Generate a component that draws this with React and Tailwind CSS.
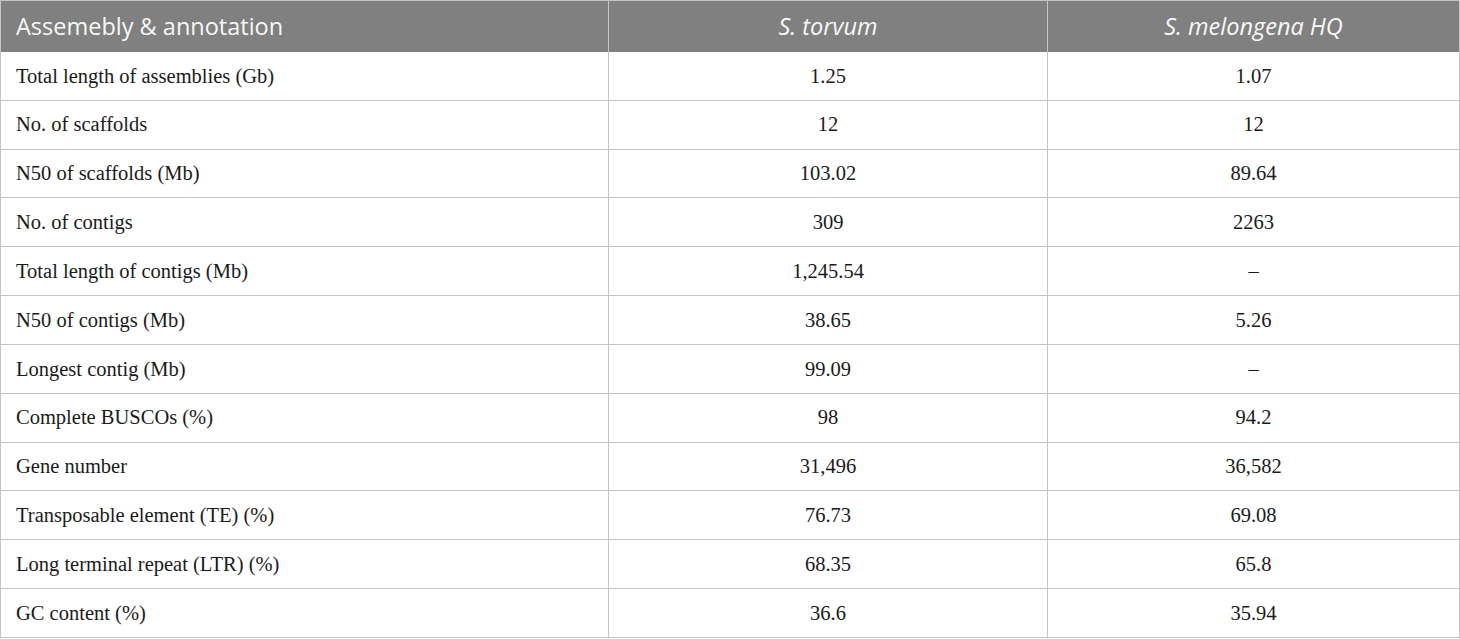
const rows = [
  ["Total length of assemblies (Gb)", "1.25", "1.07"],
  ["No. of scaffolds", "12", "12"],
  ["N50 of scaffolds (Mb)", "103.02", "89.64"],
  ["No. of contigs", "309", "2263"],
  ["Total length of contigs (Mb)", "1,245.54", "–"],
  ["N50 of contigs (Mb)", "38.65", "5.26"],
  ["Longest contig (Mb)", "99.09", "–"],
  ["Complete BUSCOs (%)", "98", "94.2"],
  ["Gene number", "31,496", "36,582"],
  ["Transposable element (TE) (%)", "76.73", "69.08"],
  ["Long terminal repeat (LTR) (%)", "68.35", "65.8"],
  ["GC content (%)", "36.6", "35.94"],
];

const App = () => {
  return (
    <div className="w-[1460px] h-[639px] bg-white">
      <div className="w-[1460px] border-l border-r border-[#c4c4c4] box-border">
        {/* Header */}
        <div className="grid grid-cols-[608px_439px_1fr] h-[52px] bg-[#808080] border-t border-[#c4c4c4] text-[#f8f8f8] text-[23.5px] font-['Open_Sans',sans-serif]">
          <div className="flex items-center pl-[15px] border-r border-[#c4c4c4]">
            Assemebly &amp; annotation
          </div>
          <div className="flex items-center justify-center italic border-r border-[#c4c4c4]">
            S. torvum
          </div>
          <div className="flex items-center justify-center italic">
            S. melongena HQ
          </div>
        </div>

        {/* Body */}
        {rows.map((r, i) => (
          <div
            key={i}
            className="grid grid-cols-[608px_439px_1fr] h-[48.83px] border-b border-[#c4c4c4] text-[20.5px] text-[#1a1a1a] font-['Liberation_Serif',serif]"
          >
            <div className="flex items-center pl-[15px] border-r border-[#c4c4c4]">
              {r[0]}
            </div>
            <div className="flex items-center justify-center border-r border-[#c4c4c4]">
              {r[1]}
            </div>
            <div className="flex items-center justify-center">{r[2]}</div>
          </div>
        ))}
      </div>
    </div>
  );
};

export default App;
